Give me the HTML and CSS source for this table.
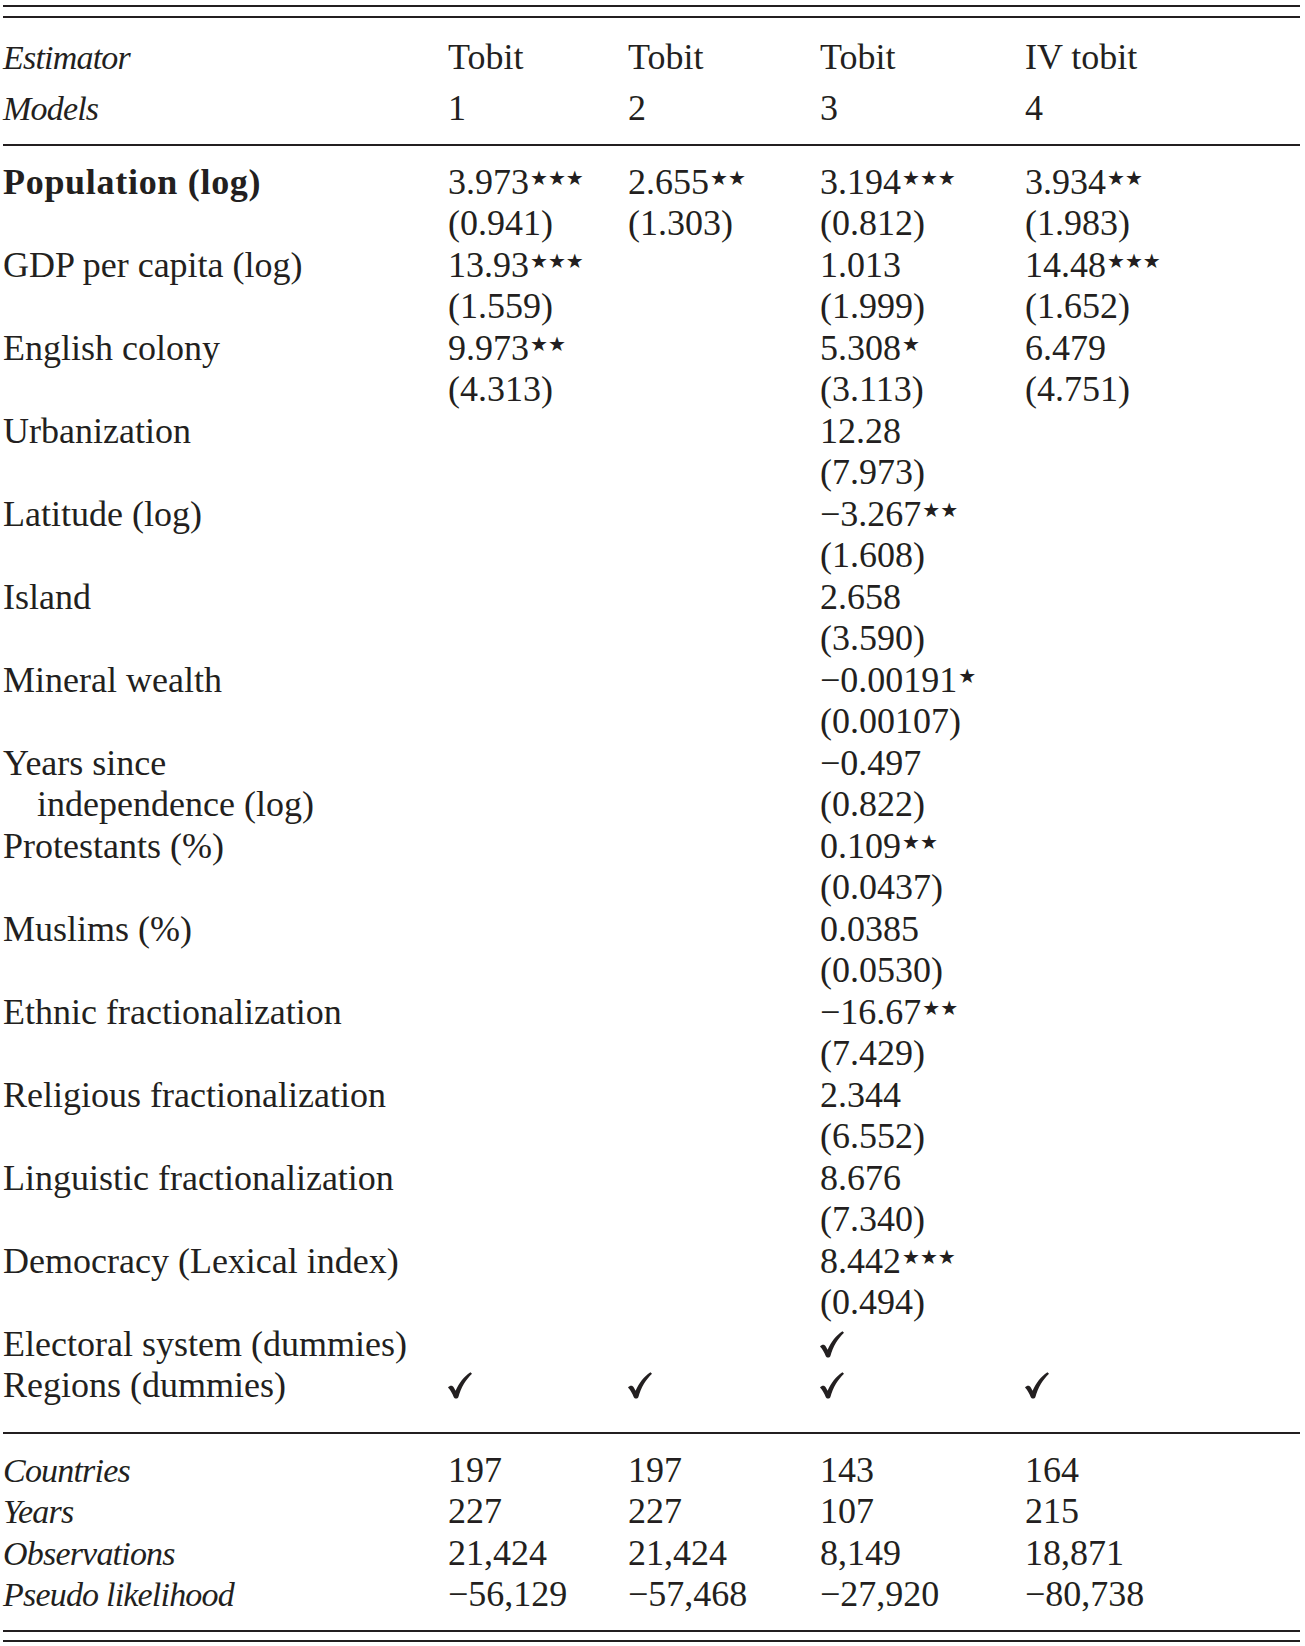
FILE: index.html
```html
<!DOCTYPE html>
<html lang="en">
<head>
<meta charset="utf-8">
<title>Tobit estimates</title>
<link rel="stylesheet" href="styles.css">
</head>
<body>
<div class="table">
  <div class="double top"><div class="rule"></div><div class="rule"></div></div>

  <div class="section head">
    <div class="row"><span class="lab it">Estimator</span><span>Tobit</span><span>Tobit</span><span>Tobit</span><span>IV tobit</span></div>
    <div class="row"><span class="lab it">Models</span><span>1</span><span>2</span><span>3</span><span>4</span></div>
  </div>

  <div class="rule"></div>

  <div class="section body">
    <div class="row"><span class="lab bold">Population (log)</span><span>3.973<span class="st">★★★</span></span><span>2.655<span class="st">★★</span></span><span>3.194<span class="st">★★★</span></span><span>3.934<span class="st">★★</span></span></div>
    <div class="row"><span class="lab"></span><span>(0.941)</span><span>(1.303)</span><span>(0.812)</span><span>(1.983)</span></div>
    <div class="row"><span class="lab">GDP per capita (log)</span><span>13.93<span class="st">★★★</span></span><span></span><span>1.013</span><span>14.48<span class="st">★★★</span></span></div>
    <div class="row"><span class="lab"></span><span>(1.559)</span><span></span><span>(1.999)</span><span>(1.652)</span></div>
    <div class="row"><span class="lab">English colony</span><span>9.973<span class="st">★★</span></span><span></span><span>5.308<span class="st">★</span></span><span>6.479</span></div>
    <div class="row"><span class="lab"></span><span>(4.313)</span><span></span><span>(3.113)</span><span>(4.751)</span></div>
    <div class="row"><span class="lab">Urbanization</span><span></span><span></span><span>12.28</span><span></span></div>
    <div class="row"><span class="lab"></span><span></span><span></span><span>(7.973)</span><span></span></div>
    <div class="row"><span class="lab">Latitude (log)</span><span></span><span></span><span>−3.267<span class="st">★★</span></span><span></span></div>
    <div class="row"><span class="lab"></span><span></span><span></span><span>(1.608)</span><span></span></div>
    <div class="row"><span class="lab">Island</span><span></span><span></span><span>2.658</span><span></span></div>
    <div class="row"><span class="lab"></span><span></span><span></span><span>(3.590)</span><span></span></div>
    <div class="row"><span class="lab">Mineral wealth</span><span></span><span></span><span>−0.00191<span class="st">★</span></span><span></span></div>
    <div class="row"><span class="lab"></span><span></span><span></span><span>(0.00107)</span><span></span></div>
    <div class="row"><span class="lab">Years since</span><span></span><span></span><span>−0.497</span><span></span></div>
    <div class="row"><span class="lab indent">independence (log)</span><span></span><span></span><span>(0.822)</span><span></span></div>
    <div class="row"><span class="lab">Protestants (%)</span><span></span><span></span><span>0.109<span class="st">★★</span></span><span></span></div>
    <div class="row"><span class="lab"></span><span></span><span></span><span>(0.0437)</span><span></span></div>
    <div class="row"><span class="lab">Muslims (%)</span><span></span><span></span><span>0.0385</span><span></span></div>
    <div class="row"><span class="lab"></span><span></span><span></span><span>(0.0530)</span><span></span></div>
    <div class="row"><span class="lab">Ethnic fractionalization</span><span></span><span></span><span>−16.67<span class="st">★★</span></span><span></span></div>
    <div class="row"><span class="lab"></span><span></span><span></span><span>(7.429)</span><span></span></div>
    <div class="row"><span class="lab">Religious fractionalization</span><span></span><span></span><span>2.344</span><span></span></div>
    <div class="row"><span class="lab"></span><span></span><span></span><span>(6.552)</span><span></span></div>
    <div class="row"><span class="lab">Linguistic fractionalization</span><span></span><span></span><span>8.676</span><span></span></div>
    <div class="row"><span class="lab"></span><span></span><span></span><span>(7.340)</span><span></span></div>
    <div class="row"><span class="lab">Democracy (Lexical index)</span><span></span><span></span><span>8.442<span class="st">★★★</span></span><span></span></div>
    <div class="row"><span class="lab"></span><span></span><span></span><span>(0.494)</span><span></span></div>
    <div class="row"><span class="lab">Electoral system (dummies)</span><span></span><span></span><span><svg class="chk" viewBox="0 0 24 27" aria-label="✓"><path d="M0 15.5C1.8 13.3 4.6 13.2 5.8 15.4L7.6 18.8C11 10.8 15.8 4.8 22.4 0.2L24 1.8C18 7.4 13.2 15.4 10.4 25C9.7 27 6.6 27.2 5.8 25.2C4.4 21.8 2.4 17.8 0 15.5Z"/></svg></span><span></span></div>
    <div class="row"><span class="lab">Regions (dummies)</span><span><svg class="chk" viewBox="0 0 24 27" aria-label="✓"><path d="M0 15.5C1.8 13.3 4.6 13.2 5.8 15.4L7.6 18.8C11 10.8 15.8 4.8 22.4 0.2L24 1.8C18 7.4 13.2 15.4 10.4 25C9.7 27 6.6 27.2 5.8 25.2C4.4 21.8 2.4 17.8 0 15.5Z"/></svg></span><span><svg class="chk" viewBox="0 0 24 27" aria-label="✓"><path d="M0 15.5C1.8 13.3 4.6 13.2 5.8 15.4L7.6 18.8C11 10.8 15.8 4.8 22.4 0.2L24 1.8C18 7.4 13.2 15.4 10.4 25C9.7 27 6.6 27.2 5.8 25.2C4.4 21.8 2.4 17.8 0 15.5Z"/></svg></span><span><svg class="chk" viewBox="0 0 24 27" aria-label="✓"><path d="M0 15.5C1.8 13.3 4.6 13.2 5.8 15.4L7.6 18.8C11 10.8 15.8 4.8 22.4 0.2L24 1.8C18 7.4 13.2 15.4 10.4 25C9.7 27 6.6 27.2 5.8 25.2C4.4 21.8 2.4 17.8 0 15.5Z"/></svg></span><span><svg class="chk" viewBox="0 0 24 27" aria-label="✓"><path d="M0 15.5C1.8 13.3 4.6 13.2 5.8 15.4L7.6 18.8C11 10.8 15.8 4.8 22.4 0.2L24 1.8C18 7.4 13.2 15.4 10.4 25C9.7 27 6.6 27.2 5.8 25.2C4.4 21.8 2.4 17.8 0 15.5Z"/></svg></span></div>
  </div>

  <div class="rule"></div>

  <div class="section foot">
    <div class="row"><span class="lab it">Countries</span><span>197</span><span>197</span><span>143</span><span>164</span></div>
    <div class="row"><span class="lab it">Years</span><span>227</span><span>227</span><span>107</span><span>215</span></div>
    <div class="row"><span class="lab it">Observations</span><span>21,424</span><span>21,424</span><span>8,149</span><span>18,871</span></div>
    <div class="row"><span class="lab it">Pseudo likelihood</span><span>−56,129</span><span>−57,468</span><span>−27,920</span><span>−80,738</span></div>
  </div>

  <div class="double bottom"><div class="rule"></div><div class="rule"></div></div>
</div>
</body>
</html>
```

FILE: styles.css
```css
html, body {
  margin: 0;
  padding: 0;
  background: #ffffff;
}

body {
  color: #231f20;
  font-family: "Liberation Serif", "Times New Roman", serif;
  font-size: 36px;
}

.table {
  margin-left: 3px;
  width: 1297px;
  padding-top: 5px;
}

.rule {
  height: 2px;
  background: #231f20;
}

.double {
  display: flex;
  flex-direction: column;
}

.double.top {
  gap: 9px;
}

.double.bottom {
  gap: 8px;
}

.row {
  display: grid;
  grid-template-columns: 445px 180px 192px 205px 275px;
  white-space: nowrap;
}

.head {
  padding: 14px 0 10.35px;
}

.head .row {
  height: 51px;
  line-height: 51px;
}

.body {
  padding: 15.5px 0 25.25px;
}

.body .row {
  height: 41.5px;
  line-height: 41.5px;
}

.foot {
  padding: 15.6px 0 14.4px;
}

.foot .row {
  height: 41.5px;
  line-height: 41.5px;
}

.it {
  font-style: italic;
  font-size: 34px;
  letter-spacing: -0.8px;
}

.bold {
  font-weight: bold;
  letter-spacing: 0.7px;
}

.indent {
  padding-left: 34px;
}

.st {
  font-family: "DejaVu Sans", sans-serif;
  font-size: 20px;
  letter-spacing: 0;
  line-height: 0;
  vertical-align: 9px;
  margin-left: 1px;
}

.chk {
  width: 24px;
  height: 27px;
  fill: #231f20;
  vertical-align: -2px;
}
```
